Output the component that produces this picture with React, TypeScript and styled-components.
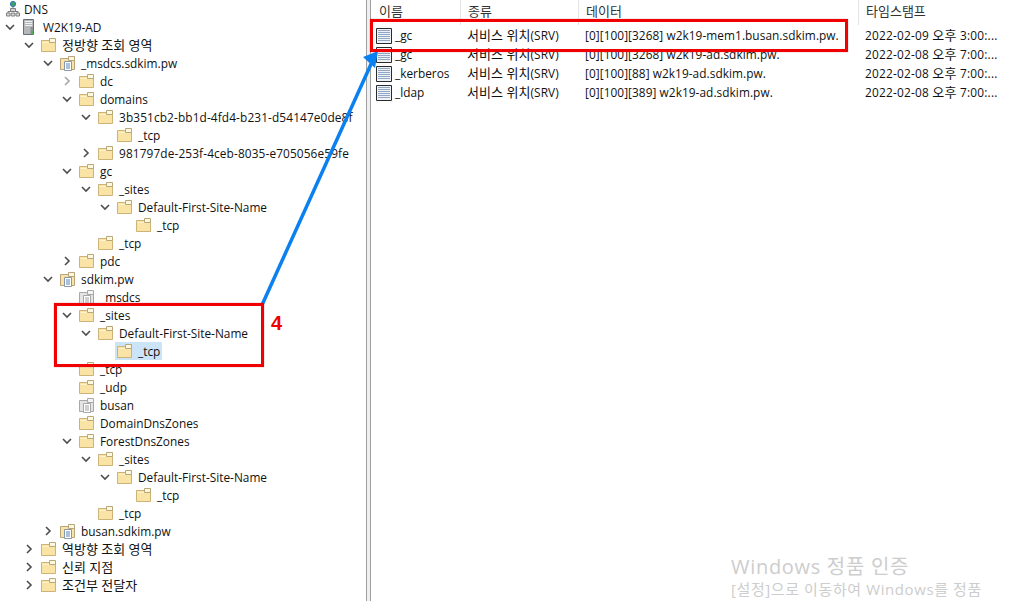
import styled, {createGlobalStyle} from "styled-components";

const GlobalStyle = createGlobalStyle`
  html, body {
    margin: 0;
    padding: 0;
    background: #fff;
  }
`;

const Page = styled.div`
  position: relative;
  width: 1013px;
  height: 601px;
  overflow: hidden;
  display: flex;
  background: #fff;
  color: #111;
  font-family: "Open Sans", "Noto Sans CJK KR", sans-serif;
  font-size: 11.85px;
`;

const Hangul = styled.span`
  font-size: 13px;
`;

const TreePane = styled.div`
  width: 366px;
  flex: none;
  overflow: hidden;
`;

const Divider = styled.div`
  width: 5px;
  flex: none;
  box-sizing: border-box;
  background: #efefef;
  border-left: 1px solid #a0a0a0;
  border-right: 1px solid #a0a0a0;
`;

const ListPane = styled.div`
  flex: 1;
  display: flex;
  flex-direction: column;
`;

const TreeRow = styled.div<{$depth: number}>`
  height: 18px;
  display: flex;
  align-items: center;
  white-space: nowrap;
  padding-left: ${props => props.$depth * 19 + 5}px;
`;

const Arrow = styled.span`
  width: 10px;
  height: 10px;
  margin-right: 7px;
  flex: none;
  display: flex;
`;

const IconSlot = styled.span`
  width: 16px;
  height: 16px;
  margin-right: 3px;
  flex: none;
  display: flex;
`;

const RootIconSlot = styled(IconSlot)`
  margin-right: 1px;
`;

const Label = styled.span<{$tracked?: boolean}>`
  padding: 1px 2px 0;
  line-height: 17px;
  letter-spacing: ${props => props.$tracked ? "0.12px" : "normal"};
`;

const ItemBody = styled.span<{$selected?: boolean}>`
  display: flex;
  align-items: center;
  height: 18px;
  margin-left: -2px;
  padding-left: 2px;
  background: ${props => props.$selected ? "#cce4f7" : "transparent"};
`;

const columns = "90px 118px 280px 1fr";

const HeaderRow = styled.div`
  height: 25px;
  display: grid;
  grid-template-columns: ${columns};
`;

const HeaderCell = styled.div`
  height: 25px;
  line-height: 22px;
  padding-left: 7px;
  color: #333;
  border-right: 1px solid #e5e5e5;
  box-sizing: border-box;
  &:first-child {
    padding-left: 8px;
  }
  &:last-child {
    border-right: 0;
  }
`;

const DataRow = styled.div`
  height: 19px;
  display: grid;
  grid-template-columns: ${columns};
  align-items: center;
  white-space: nowrap;
`;

const NameCell = styled.div`
  display: flex;
  align-items: center;
  padding-left: 5px;
`;

const NameText = styled.span`
  padding-bottom: 2px;
`;

const DataCell = styled.div`
  padding-left: 6px;
  padding-bottom: 2px;
  letter-spacing: 0.06px;
`;

const TimeCell = styled(DataCell)`
  letter-spacing: 0.22px;
`;

const Callout = styled.div<{$x: number; $y: number; $w: number; $h: number}>`
  position: absolute;
  left: ${props => props.$x}px;
  top: ${props => props.$y}px;
  width: ${props => props.$w}px;
  height: ${props => props.$h}px;
  box-sizing: border-box;
  border: 3px solid #f00000;
  box-shadow: 0 0 1px rgba(150, 0, 0, 0.5);
`;

const StepNumber = styled.div`
  position: absolute;
  left: 271px;
  top: 312px;
  color: #f00000;
  font-family: "Liberation Sans", sans-serif;
  font-weight: bold;
  font-size: 20px;
`;

const ArrowOverlay = styled.svg`
  position: absolute;
  left: 0;
  top: 0;
  pointer-events: none;
`;

const Watermark = styled.div`
  position: absolute;
  left: 731px;
  top: 553px;
  color: #cdcdcd;
  white-space: nowrap;
`;

const WatermarkTitle = styled.div`
  font-size: 20px;
  line-height: 27px;
  letter-spacing: 0.7px;
`;

const WatermarkText = styled.div`
  font-size: 15px;
  line-height: 18px;
  letter-spacing: 0.6px;
`;

type IconKind = "server" | "folder" | "zone" | "grayZone";

function KoreanText({text}: {text: string}) {
  const parts = text.split(/([가-힣]+(?: [가-힣]+)*)/);
  return (
    <>
      {parts.map((part, index) => (index % 2 === 1 ? <Hangul key={index}>{part}</Hangul> : part))}
    </>
  );
}

function Chevron({open, dim}: {open: boolean; dim?: boolean}) {
  return (
    <svg width="10" height="10" viewBox="0 0 10 10">
      <path
        d={open ? "M1 3 L5 7 L9 3" : "M3 1 L7 5 L3 9"}
        fill="none"
        stroke={dim ? "#a6a6a6" : "#4d4d4d"}
        strokeWidth="1.6"
      />
    </svg>
  );
}

function Folder() {
  return (
    <svg width="16" height="16" viewBox="0 0 16 16">
      <path d="M0.5 3.5 H14.5 V14.5 H0.5 Z" fill="#f9e4a6" stroke="#cdb377" />
      <path d="M8.5 1.5 H14.5 V5.5 H8.5 Z" fill="#fff8e0" stroke="#b8a878" />
      <path d="M1.5 5 H8 V6 H1.5 Z" fill="#fff3cd" />
    </svg>
  );
}

function Zone({gray}: {gray?: boolean}) {
  const body = gray ? "#e4e4e4" : "#f9e4a6";
  const line = gray ? "#a8a8a8" : "#b7a47a";
  return (
    <svg width="16" height="16" viewBox="0 0 16 16">
      <path d="M0.5 3.5 H14.5 V14.5 H0.5 Z" fill={body} stroke={line} />
      <path d="M8.5 1.5 H14.5 V5.5 H8.5 Z" fill={gray ? "#f4f4f4" : "#fff8e0"} stroke={line} />
      <path d="M4.5 6.5 H11.5 V15.5 H4.5 Z" fill="#fff" stroke={gray ? "#a8a8a8" : "#8a97a8"} />
      <path d="M6 9 H10 M6 11 H10 M6 13 H10" stroke={gray ? "#a0a0a0" : "#4f86c0"} />
    </svg>
  );
}

function DnsIcon() {
  return (
    <svg width="16" height="16" viewBox="0 0 16 16">
      <circle cx="8" cy="3" r="2.6" fill="#3fa06c" stroke="#2f78ad" />
      <path d="M8 5.5 V8 M3 12 V10.5 H13 V12" fill="none" stroke="#7a7a7a" />
      <path d="M5.5 7.5 H10.5 V10.5 H5.5 Z" fill="#d2d2d2" stroke="#808080" />
      <path d="M1.5 12 H5 V15 H1.5 Z M6.2 12 H9.8 V15 H6.2 Z M11 12 H14.5 V15 H11 Z" fill="#d8d8d8" stroke="#808080" />
    </svg>
  );
}

function ServerIcon() {
  return (
    <svg width="16" height="16" viewBox="0 0 16 16">
      <path d="M1.5 0.5 H11.5 V15.5 H1.5 Z" fill="#b4b8bb" stroke="#6a6f73" />
      <path d="M3 2.5 H10 M3 4.5 H10 M3 6.5 H10" stroke="#f0f1f2" />
      <path d="M8.5 8 H11 V15 H8.5 Z" fill="#8d9296" />
      <rect x="9" y="12.5" width="2" height="2" fill="#3cc23c" />
    </svg>
  );
}

function RecordIcon() {
  return (
    <svg width="16" height="16" viewBox="0 0 16 16">
      <path d="M0.5 0.5 H15.5 V15.5 H0.5 Z" fill="#eef2f7" stroke="#2b2b2b" />
      <path d="M2 2.5 H14 M2 4.5 H14 M2 6.5 H14 M2 8.5 H14 M2 10.5 H14 M2 12.5 H14" stroke="#8fa6c4" />
    </svg>
  );
}

function TreeIcon({kind}: {kind: IconKind}) {
  if (kind === "server") return <ServerIcon />;
  if (kind === "zone") return <Zone />;
  if (kind === "grayZone") return <Zone gray />;
  return <Folder />;
}

interface TreeItem {
  depth: number;
  label: string;
  icon?: IconKind;
  open?: boolean;
  dim?: boolean;
  selected?: boolean;
  tracked?: boolean;
}

const siteName = "Default-First-Site-Name";

const treeItems: TreeItem[] = [
  {depth: 0, label: "W2K19-AD", icon: "server", open: true},
  {depth: 1, label: "정방향 조회 영역", open: true},
  {depth: 2, label: "_msdcs.sdkim.pw", icon: "zone", open: true},
  {depth: 3, label: "dc", open: false, dim: true},
  {depth: 3, label: "domains", open: true},
  {depth: 4, label: "3b351cb2-bb1d-4fd4-b231-d54147e0de8f", open: true, tracked: true},
  {depth: 5, label: "_tcp"},
  {depth: 4, label: "981797de-253f-4ceb-8035-e705056e59fe", open: false, tracked: true},
  {depth: 3, label: "gc", open: true},
  {depth: 4, label: "_sites", open: true},
  {depth: 5, label: siteName, open: true},
  {depth: 6, label: "_tcp"},
  {depth: 4, label: "_tcp"},
  {depth: 3, label: "pdc", open: false},
  {depth: 2, label: "sdkim.pw", icon: "zone", open: true},
  {depth: 3, label: "_msdcs", icon: "grayZone"},
  {depth: 3, label: "_sites", open: true},
  {depth: 4, label: siteName, open: true},
  {depth: 5, label: "_tcp", selected: true},
  {depth: 3, label: "_tcp"},
  {depth: 3, label: "_udp"},
  {depth: 3, label: "busan", icon: "grayZone"},
  {depth: 3, label: "DomainDnsZones"},
  {depth: 3, label: "ForestDnsZones", open: true},
  {depth: 4, label: "_sites", open: true},
  {depth: 5, label: siteName, open: true},
  {depth: 6, label: "_tcp"},
  {depth: 4, label: "_tcp"},
  {depth: 2, label: "busan.sdkim.pw", icon: "zone", open: false},
  {depth: 1, label: "역방향 조회 영역", open: false},
  {depth: 1, label: "신뢰 지점", open: false},
  {depth: 1, label: "조건부 전달자", open: false},
];

const records = [
  ["_gc", "서비스 위치(SRV)", "[0][100][3268] w2k19-mem1.busan.sdkim.pw.", "2022-02-09 오후 3:00:..."],
  ["_gc", "서비스 위치(SRV)", "[0][100][3268] w2k19-ad.sdkim.pw.", "2022-02-08 오후 7:00:..."],
  ["_kerberos", "서비스 위치(SRV)", "[0][100][88] w2k19-ad.sdkim.pw.", "2022-02-08 오후 7:00:..."],
  ["_ldap", "서비스 위치(SRV)", "[0][100][389] w2k19-ad.sdkim.pw.", "2022-02-08 오후 7:00:..."],
];

export default function App() {
  return (
    <Page>
      <GlobalStyle />
      <TreePane>
        <TreeRow $depth={0}>
          <RootIconSlot><DnsIcon /></RootIconSlot>
          <Label>DNS</Label>
        </TreeRow>
        {treeItems.map((item, index) => (
          <TreeRow key={index} $depth={item.depth}>
            <Arrow>
              {item.open !== undefined && <Chevron open={item.open} dim={item.dim} />}
            </Arrow>
            <ItemBody $selected={item.selected}>
              <IconSlot><TreeIcon kind={item.icon ?? "folder"} /></IconSlot>
              <Label $tracked={item.tracked}><KoreanText text={item.label} /></Label>
            </ItemBody>
          </TreeRow>
        ))}
      </TreePane>
      <Divider />
      <ListPane>
        <HeaderRow>
          <HeaderCell><Hangul>이름</Hangul></HeaderCell>
          <HeaderCell><Hangul>종류</Hangul></HeaderCell>
          <HeaderCell><Hangul>데이터</Hangul></HeaderCell>
          <HeaderCell><Hangul>타임스탬프</Hangul></HeaderCell>
        </HeaderRow>
        {records.map((record, index) => (
          <DataRow key={index}>
            <NameCell>
              <IconSlot><RecordIcon /></IconSlot>
              <NameText>{record[0]}</NameText>
            </NameCell>
            <DataCell><KoreanText text={record[1]} /></DataCell>
            <DataCell>{record[2]}</DataCell>
            <TimeCell><KoreanText text={record[3]} /></TimeCell>
          </DataRow>
        ))}
      </ListPane>
      <ArrowOverlay width="1013" height="601" viewBox="0 0 1013 601">
        <path d="M262 305 L372 62" stroke="#0b80f0" strokeWidth="3.5" fill="none" />
        <path d="M378 51 L363 57 L375 68 Z" fill="#0b80f0" />
      </ArrowOverlay>
      <Callout $x={370} $y={19} $w={478} $h={33} />
      <Callout $x={54} $y={303} $w={210} $h={64} />
      <StepNumber>4</StepNumber>
      <Watermark>
        <WatermarkTitle>Windows 정품 인증</WatermarkTitle>
        <WatermarkText>[설정]으로 이동하여 Windows를 정품</WatermarkText>
      </Watermark>
    </Page>
  );
}
